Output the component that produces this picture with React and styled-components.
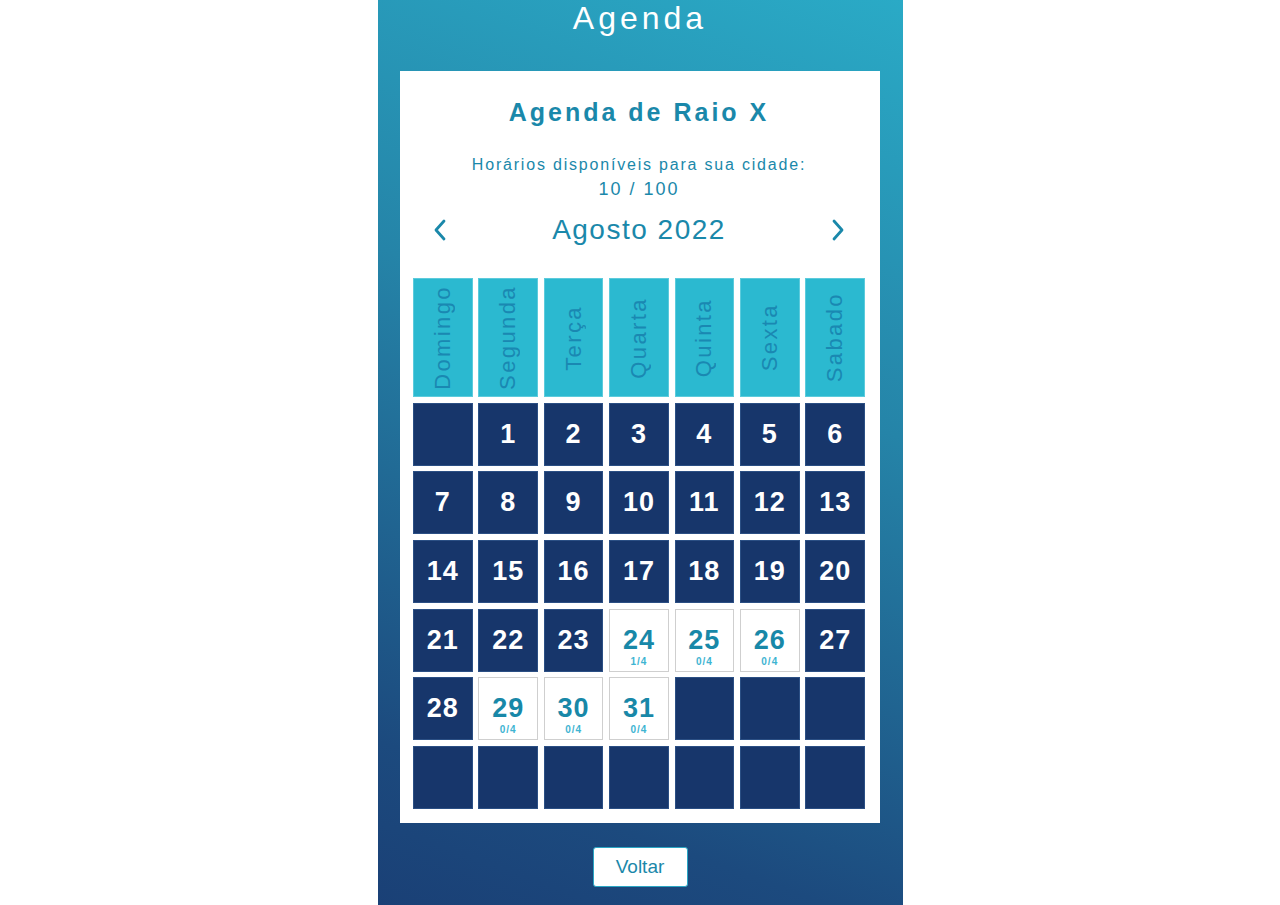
import React, { useState } from "react";
import styled, { createGlobalStyle } from "styled-components";

const GlobalStyle = createGlobalStyle`
  html, body {
    margin: 0;
    padding: 0;
    background: #ffffff;
    font-family: "Liberation Sans", Arial, sans-serif;
  }
`;

const Page = styled.div`
  width: 525px;
  min-height: 905px;
  margin: 0 auto;
  background: linear-gradient(200deg, #2aaac6 0%, #2584a8 40%, #1c4a7e 85%, #1a4076 100%);
  display: flex;
  flex-direction: column;
  align-items: center;
`;

const PageTitle = styled.h1`
  margin: 0;
  font-size: 32px;
  line-height: 36px;
  font-weight: normal;
  letter-spacing: 4px;
  color: #ffffff;
`;

const Card = styled.div`
  width: 480px;
  box-sizing: border-box;
  margin-top: 35px;
  padding: 26px 15px 14px 13px;
  background: #ffffff;
  display: flex;
  flex-direction: column;
  align-items: center;
  color: #1a88aa;
`;

const CardTitle = styled.h2`
  margin: 0;
  font-size: 25px;
  line-height: 30px;
  font-weight: bold;
  letter-spacing: 3px;
`;

const Info = styled.p`
  margin: 25px 0 0 0;
  font-size: 16px;
  line-height: 25px;
  letter-spacing: 1.8px;
  text-align: center;
`;

const Count = styled.span`
  display: block;
  font-size: 18px;
  letter-spacing: 2px;
`;

const MonthBar = styled.div`
  width: 100%;
  margin-top: 8px;
  height: 40px;
  display: flex;
  align-items: center;
  justify-content: space-between;
  padding: 0 20px;
  box-sizing: border-box;
`;

const Arrow = styled.button`
  border: 0;
  background: transparent;
  padding: 0;
  width: 14px;
  display: flex;
  align-items: center;
  justify-content: center;
  color: #1a88aa;
  cursor: pointer;
`;

const Month = styled.span`
  font-size: 28px;
  letter-spacing: 1.5px;
`;

const Grid = styled.div`
  width: 100%;
  margin-top: 28px;
  display: grid;
  grid-template-columns: repeat(7, 1fr);
  grid-template-rows: 119px repeat(6, 63px);
  gap: 5.7px;
`;

const WeekDay = styled.div`
  background: #2bb9d0;
  border: 1px solid #5ccbdc;
  display: flex;
  align-items: center;
  justify-content: center;
  span {
    writing-mode: vertical-rl;
    transform: rotate(180deg);
    font-size: 22px;
    letter-spacing: 2.4px;
    color: #1a88b2;
  }
`;

const Day = styled.div`
  position: relative;
  box-sizing: border-box;
  background: ${(p) => (p.$open ? "#ffffff" : "#17366b")};
  border: 1px solid ${(p) => (p.$open ? "#cfcfcf" : "#2b4f84")};
  display: flex;
  align-items: center;
  justify-content: center;
  color: ${(p) => (p.$open ? "#1888a8" : "#ffffff")};
  font-size: 27px;
  font-weight: bold;
  letter-spacing: 1px;
  cursor: ${(p) => (p.$open ? "pointer" : "default")};
`;

const Slots = styled.span`
  position: absolute;
  left: 0;
  right: 0;
  bottom: 4px;
  text-align: center;
  font-size: 10px;
  font-weight: bold;
  letter-spacing: 1px;
  color: #3eb4d2;
`;

const BackButton = styled.button`
  margin-top: 24px;
  width: 95px;
  height: 40px;
  background: #ffffff;
  border: 1px solid #2aa6c4;
  border-radius: 3px;
  font-family: "Liberation Sans", Arial, sans-serif;
  font-size: 19px;
  color: #1a88aa;
  cursor: pointer;
`;

const weekDays = ["Domingo", "Segunda", "Terça", "Quarta", "Quinta", "Sexta", "Sabado"];

// vagas abertas no mes
const openDays = { 24: "1/4", 25: "0/4", 26: "0/4", 29: "0/4", 30: "0/4", 31: "0/4" };

const Chevron = ({ dir }) => (
  <svg width="14" height="24" viewBox="0 0 14 24" fill="none">
    <path
      d={dir === "left" ? "M11 3 L3 12 L11 21" : "M3 3 L11 12 L3 21"}
      stroke="currentColor"
      strokeWidth="2.8"
      strokeLinecap="round"
      strokeLinejoin="round"
    />
  </svg>
);

const App = () => {
  const [month] = useState("Agosto 2022");

  // agosto 2022 comeca na segunda
  const cells = [];
  for (let i = 0; i < 42; i++) {
    cells.push(i >= 1 && i <= 31 ? i : null);
  }

  return (
    <>
      <GlobalStyle />
      <Page>
        <PageTitle>Agenda</PageTitle>
        <Card>
          <CardTitle>Agenda de Raio X</CardTitle>
          <Info>
            Horários disponíveis para sua cidade:
            <Count>10 / 100</Count>
          </Info>
          <MonthBar>
            <Arrow>
              <Chevron dir="left" />
            </Arrow>
            <Month>{month}</Month>
            <Arrow>
              <Chevron dir="right" />
            </Arrow>
          </MonthBar>
          <Grid>
            {weekDays.map((d) => (
              <WeekDay key={d}>
                <span>{d}</span>
              </WeekDay>
            ))}
            {cells.map((n, i) => (
              <Day key={i} $open={!!openDays[n]}>
                {n}
                {openDays[n] && <Slots>{openDays[n]}</Slots>}
              </Day>
            ))}
          </Grid>
        </Card>
        <BackButton>Voltar</BackButton>
      </Page>
    </>
  );
};

export default App;
